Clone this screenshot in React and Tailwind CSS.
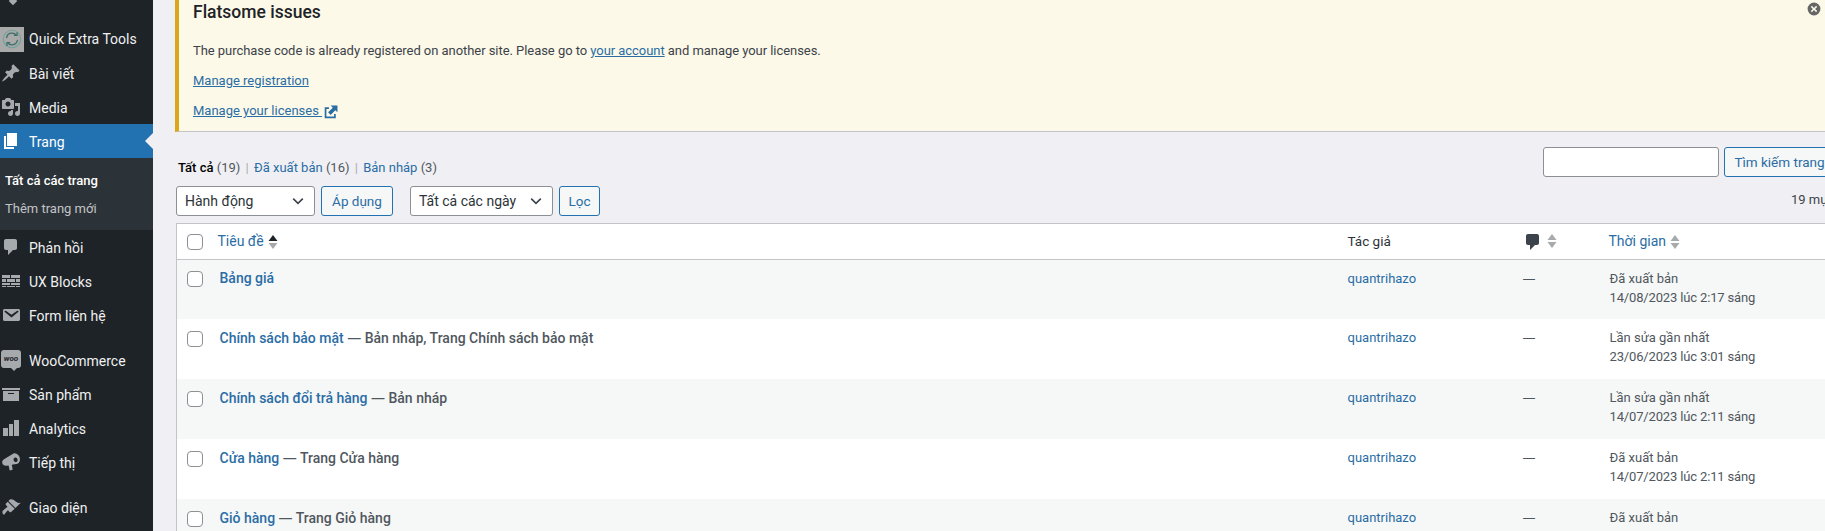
import React from 'react';

const font = "font-['Roboto','Noto_Sans',sans-serif]";

const Dash = ({ d, className = 'fill-[#a7aaad]', size = 20 }) => (
  <svg viewBox="0 0 20 20" width={size} height={size} className={className}>
    <path d={d} />
  </svg>
);

const paths = {
  post: 'M10.44 3.02l1.82-1.82 6.36 6.35-1.83 1.82c-1.05-.68-2.48-.57-3.41.36l-.75.75c-.92.93-1.04 2.35-.35 3.41l-1.83 1.82-2.41-2.41-2.8 2.79c-.42.42-3.38 2.71-3.8 2.29s1.86-3.39 2.28-3.81l2.79-2.79L4.1 9.36l1.83-1.82c1.05.69 2.48.57 3.4-.36l.75-.75c.93-.92 1.05-2.35.36-3.41z',
  media: 'M13 11V4c0-.55-.45-1-1-1h-1.67L9 1H5L3.67 3H2c-.55 0-1 .45-1 1v7c0 .55.45 1 1 1h10c.55 0 1-.45 1-1zM7 4.5c1.38 0 2.5 1.12 2.5 2.5S8.38 9.5 7 9.5 4.5 8.38 4.5 7 5.62 4.5 7 4.5zM14 6h5v10.5c0 1.38-1.12 2.5-2.5 2.5S14 17.88 14 16.5s1.12-2.5 2.5-2.5c.17 0 .34.02.5.05V9h-3V6zm-4 8.05V13h2v3.5c0 1.38-1.12 2.5-2.5 2.5S7 17.88 7 16.5 8.12 14 9.5 14c.17 0 .34.02.5.05z',
  page: 'M6 15V2h10v13H6zm-1 1h8v2H3V5h2v11z',
  comment: 'M5 2h9c1.1 0 2 .9 2 2v7c0 1.1-.9 2-2 2h-2l-5 5v-5H5c-1.1 0-2-.9-2-2V4c0-1.1.9-2 2-2z',
  blocks: 'M1 4h8v3H1zM10 4h9v3h-9zM1 8h4v3H1zM6 8h8v3H6zM15 8h4v3h-4zM1 12h8v2H1zM10 12h9v2h-9zM1 15h4v1H1zM6 15h8v1H6zM15 15h4v1h-4z',
  email: 'M3.87 4h13.25C18.37 4 19 4.59 19 5.79v8.42c0 1.19-.63 1.79-1.88 1.79H3.87c-1.25 0-1.88-.6-1.88-1.79V5.79c0-1.2.63-1.79 1.88-1.79zm6.62 8.6l6.74-5.53c.24-.2.43-.66.13-1.07-.29-.41-.82-.42-1.17-.17l-5.7 3.86L4.8 5.83c-.35-.25-.88-.24-1.17.17-.3.41-.11.87.13 1.07z',
  archive: 'M19 4v2H1V4h18zM2 7h16v10H2V7zm11 3V9H7v1h6z',
  chart: 'M2 10h5v8H2zM8 6h4v12H8zM13 2h5v16h-5z',
  speaker: 'M12.500 1.500c2.800-1 5.600 1.500 6.300 4.400.7 2.700-.5 5.400-3 6l-2.400.4-2.600.5.9 5-3 .7-1.100-5.100-1.900.3C3.500 14 1.700 12.800 1.300 11.200.9 9.600 1.700 8 3 7.300zM14 5.500c-1.100.3-1.700 1.500-1.300 2.800.3 1.200 1.400 2 2.500 1.700 1.100-.3 1.700-1.500 1.300-2.800-.3-1.200-1.400-2-2.500-1.700z',
  brush: 'M14.48 11.06L7.41 3.99l1.5-1.5c.5-.56 2.3-.47 3.51.32 1.21.8 1.43 1.28 2.91 2.1 1.18.64 2.45 1.26 4.45.85zm-.71.71L6.7 4.7 4.93 6.47c-.39.39-.39 1.02 0 1.41l1.06 1.06c.39.39.39 1.03 0 1.42-.6.6-1.43 1.11-2.21 1.69-.35.26-.7.53-1.01.84C1.43 13.23.91 15.95 2.09 17.13c.39.39 1.17.39 1.56 0 .31-.31.58-.66.84-1.01.58-.78 1.09-1.61 1.69-2.21.39-.39 1.03-.39 1.42 0l1.06 1.06c.39.39 1.02.39 1.41 0z',
};

const QuickIcon = () => (
  <div className="w-6 h-[25px] bg-[#a9a9a9] flex items-center justify-center">
    <svg viewBox="0 0 24 24" width="22" height="22" fill="none" strokeWidth="1.4">
      <circle cx="12" cy="12" r="9.500" stroke="#6fa39d" strokeWidth="1.200" />
      <path d="M6 11c.6-3.500 3.400-5.500 6.500-5.300 1.600.1 2.800.7 3.800 1.700" stroke="#3d6e6a" />
      <path d="M18 13c-.6 3.500-3.400 5.500-6.500 5.300-1.600-.1-2.800-.7-3.800-1.700" stroke="#3d6e6a" />
      <path d="M17.500 4.500v3.500H14M6.500 19.500V16H10" stroke="#3d6e6a" />
    </svg>
  </div>
);

const WooIcon = () => (
  <div className="relative w-5 h-[18px] -mt-[2px] rounded-[3px] bg-[#a7aaad] flex items-center justify-center">
    <span className="text-[8px] leading-none font-bold italic text-[#1d2327]">woo</span>
    <span className="absolute -bottom-[3px] left-[10px] w-0 h-0 border-l-[3px] border-r-[3px] border-t-[3px] border-l-transparent border-r-transparent border-t-[#a7aaad]" />
  </div>
);

const MenuItem = ({ icon, label, active }) => (
  <div className={`relative h-[34px] flex items-center text-[14px] ${active ? 'bg-[#2271b1] text-white' : 'text-[#f0f0f1]'}`}>
    <div className="w-[29px] pl-[1px] flex items-center">
      {typeof icon === 'string' ? <Dash d={paths[icon]} className={active ? 'fill-white' : 'fill-[#a7aaad]'} /> : icon}
    </div>
    <span className="pt-[2px]">{label}</span>
    {active && (
      <span className="absolute right-0 top-[9px] w-0 h-0 border-y-[8px] border-r-[8px] border-y-transparent border-r-[#f0f0f4]" />
    )}
  </div>
);

const Sidebar = () => (
  <aside className="w-[153px] shrink-0 bg-[#1d2327] flex flex-col">
    <div className="h-[22px] pl-[10px] overflow-hidden">
      <div className="w-[6px] h-[6px] -mt-[2px] rotate-45 bg-[#a7aaad]" />
    </div>
    <div className="h-[34px] flex items-center text-[14px] text-[#f0f0f1]">
      <div className="w-[29px]"><QuickIcon /></div>
      <span>Quick Extra Tools</span>
    </div>
    <MenuItem icon="post" label="Bài viết" />
    <MenuItem icon="media" label="Media" />
    <MenuItem icon="page" label="Trang" active />
    <div className="h-[72px] bg-[#2c3338] pt-[10px] px-[5px] text-[13px]">
      <div className="h-[26px] leading-[26px] font-medium text-white">Tất cả các trang</div>
      <div className="h-[28px] leading-[30px] text-[#c3c4c7]">Thêm trang mới</div>
    </div>
    <MenuItem icon="comment" label="Phản hồi" />
    <MenuItem icon="blocks" label="UX Blocks" />
    <MenuItem icon="email" label="Form liên hệ" />
    <div className="mt-[11px]">
      <MenuItem icon={<WooIcon />} label="WooCommerce" />
    </div>
    <MenuItem icon="archive" label="Sản phẩm" />
    <MenuItem icon="chart" label="Analytics" />
    <MenuItem icon="speaker" label="Tiếp thị" />
    <div className="mt-[11px]">
      <MenuItem icon="brush" label="Giao diện" />
    </div>
  </aside>
);

const Link = ({ children }) => <a className="text-[#2a6da5] underline">{children}</a>;

const Notice = () => (
  <div className="relative w-[1670px] ml-[22px] h-[132px] bg-[#fcf9e8] border-l-4 border-l-[#dba617] border-b border-b-[#c3c4c7] pl-[14px] text-[13px] text-[#3c434a]">
    <h2 className="h-[24px] leading-[24px] text-[17.5px] font-medium text-[#1d2327]">Flatsome issues</h2>
    <p className="mt-[18px] h-[18px] leading-[18px] tracking-[-0.05px]">
      The purchase code is already registered on another site. Please go to <Link>your account</Link> and manage your licenses.
    </p>
    <p className="mt-[12px] h-[18px] leading-[18px]"><Link>Manage registration</Link></p>
    <p className="mt-[12px] h-[18px] leading-[18px] flex items-center gap-[1px]">
      <Link>Manage your licenses&nbsp;</Link>
      <svg viewBox="0 0 20 20" width="17" height="17" className="fill-[#2a6da5]">
        <path d="M9 3h8v8l-2.500-2.500L9 14l-3-3 5.500-5.500zM2 5h5v2H4v9h9v-3h2v5H2z" />
      </svg>
    </p>
    <svg viewBox="0 0 20 20" width="16" height="16" className="absolute left-[1627px] top-[1px] fill-[#666]">
      <path d="M10 2a8 8 0 1 0 0 16 8 8 0 0 0 0-16zm4 10.600L12.600 14 10 11.400 7.400 14 6 12.600 8.600 10 6 7.400 7.400 6 10 8.600 12.600 6 14 7.400 11.400 10z" />
    </svg>
  </div>
);

const Select = ({ label, width }) => (
  <div className={`${width} h-[30px] bg-white border border-[#8c8f94] rounded-[3px] pl-[8px] pr-[8px] flex items-center justify-between text-[14px] text-[#2c3338]`}>
    <span>{label}</span>
    <svg viewBox="0 0 20 20" width="16" height="16" fill="none" stroke="#3c434a" strokeWidth="2">
      <path d="M4 7l6 6 6-6" />
    </svg>
  </div>
);

const Button = ({ children, className = '' }) => (
  <div className={`h-[30px] bg-[#f6f7f7] border border-[#2271b1] rounded-[3px] flex items-center justify-center text-[13.5px] text-[#2a6da5] ${className}`}>
    {children}
  </div>
);

const Toolbar = () => (
  <div className="ml-[23px] w-[1670px] h-[91px] flex justify-between">
    <div>
      <div className="mt-[27px] h-[18px] leading-[18px] pl-[2px] text-[13px] text-[#50575e]">
        <span className="font-medium text-black">Tất cả</span> (19) <span className="text-[#a7aaad] px-[2px]">|</span>{' '}
        <span className="text-[#2a6da5]">Đã xuất bản</span> (16) <span className="text-[#a7aaad] px-[2px]">|</span>{' '}
        <span className="text-[#2a6da5]">Bản nháp</span> (3)
      </div>
      <div className="mt-[9px] flex items-center">
        <Select label="Hành động" width="w-[139px]" />
        <Button className="ml-[6px] w-[72px]">Áp dụng</Button>
        <div className="ml-[17px]"><Select label="Tất cả các ngày" width="w-[143px]" /></div>
        <Button className="ml-[6px] w-[41px]">Lọc</Button>
      </div>
    </div>
    <div className="w-[304px] shrink-0 pl-[1px]">
      <div className="mt-[15px] flex items-center gap-[5px]">
        <div className="w-[176px] h-[30px] bg-white border border-[#8c8f94] rounded-[3px]" />
        <Button className="w-[111px]">Tìm kiếm trang</Button>
      </div>
      <div className="mt-[14px] pl-[248px] h-[18px] leading-[18px] text-[13px] whitespace-nowrap text-[#3c434a]">19 mục</div>
    </div>
  </div>
);

const Checkbox = () => (
  <div className="w-4 h-4 bg-white border border-[#8c8f94] rounded-[4px]" />
);

const Sort = ({ up = '#a7aaad' }) => (
  <svg viewBox="0 0 10 16" width="10" height="16" className="inline-block -translate-y-[1px]">
    <path d="M5 1l4.500 6H.5z" fill={up} />
    <path d="M5 15l4.500-6H.5z" fill="#a7aaad" />
  </svg>
);

const rows = [
  { title: 'Bảng giá', note: '', status: 'Đã xuất bản', date: '14/08/2023 lúc 2:17 sáng' },
  { title: 'Chính sách bảo mật', note: 'Bản nháp, Trang Chính sách bảo mật', status: 'Lần sửa gần nhất', date: '23/06/2023 lúc 3:01 sáng' },
  { title: 'Chính sách đổi trả hàng', note: 'Bản nháp', status: 'Lần sửa gần nhất', date: '14/07/2023 lúc 2:11 sáng' },
  { title: 'Cửa hàng', note: 'Trang Cửa hàng', status: 'Đã xuất bản', date: '14/07/2023 lúc 2:11 sáng' },
  { title: 'Giỏ hàng', note: 'Trang Giỏ hàng', status: 'Đã xuất bản', date: '14/07/2023 lúc 2:11 sáng' },
];

const EmDash = () => <span className="font-['Open_Sans'] font-normal">—</span>;

const PagesTable = () => (
  <table className="ml-[23px] w-[1670px] table-fixed border-collapse border border-[#c3c4c7] bg-white text-[13px]">
    <colgroup>
      <col className="w-[34px]" />
      <col className="w-[1130px]" />
      <col className="w-[174px]" />
      <col className="w-[86px]" />
      <col />
    </colgroup>
    <thead>
      <tr className="h-[36px] border-b border-[#c3c4c7] text-left font-normal">
        <th className="pl-[10px] font-normal"><Checkbox /></th>
        <th className="pl-[7px] font-normal text-[#2a6da5] text-[14px]">
          Tiêu đề <span className="ml-[1px] align-middle"><Sort up="#1d2327" /></span>
        </th>
        <th className="pl-[7px] font-normal text-[13.5px] text-[#2c3338]">Tác giả</th>
        <th className="pl-[8px] font-normal">
          <span className="flex items-center gap-[4px]">
            <Dash d={paths.comment} className="fill-[#3c434a]" size={20} />
            <Sort />
          </span>
        </th>
        <th className="pl-[8px] font-normal text-[#2a6da5] text-[14px]">
          Thời gian <span className="align-middle"><Sort /></span>
        </th>
      </tr>
    </thead>
    <tbody>
      {rows.map((row, i) => (
        <tr key={row.title} className={`align-top ${i === 0 ? 'h-[59px]' : 'h-[60px]'} ${i % 2 === 0 ? 'bg-[#f6f7f7]' : 'bg-white'}`}>
          <td className={`pl-[10px] ${i === 0 ? 'pt-[11px]' : 'pt-[12px]'}`}><Checkbox /></td>
          <td className="pl-[9px] pt-[9px] text-[14px] font-medium leading-[19px] text-[#50575e]">
            <span className="text-[#2a6da5]">{row.title}</span>
            {row.note && <> <EmDash /> {row.note}</>}
          </td>
          <td className="pl-[7px] pt-[9px] leading-[19px] text-[#2a6da5]">quantrihazo</td>
          <td className="pl-[8px] pt-[9px] leading-[19px] text-[#50575e]"><EmDash /></td>
          <td className="pl-[9px] pt-[9px] leading-[19px] text-[#50575e]">
            {row.status}<br /><span className="tracking-[-0.15px]">{row.date}</span>
          </td>
        </tr>
      ))}
    </tbody>
  </table>
);

export default function App() {
  return (
    <div className={`w-[1825px] h-[531px] overflow-hidden flex bg-[#f0f0f4] ${font}`}>
      <Sidebar />
      <main className="flex-1 min-w-0 overflow-hidden">
        <Notice />
        <Toolbar />
        <PagesTable />
      </main>
    </div>
  );
}
